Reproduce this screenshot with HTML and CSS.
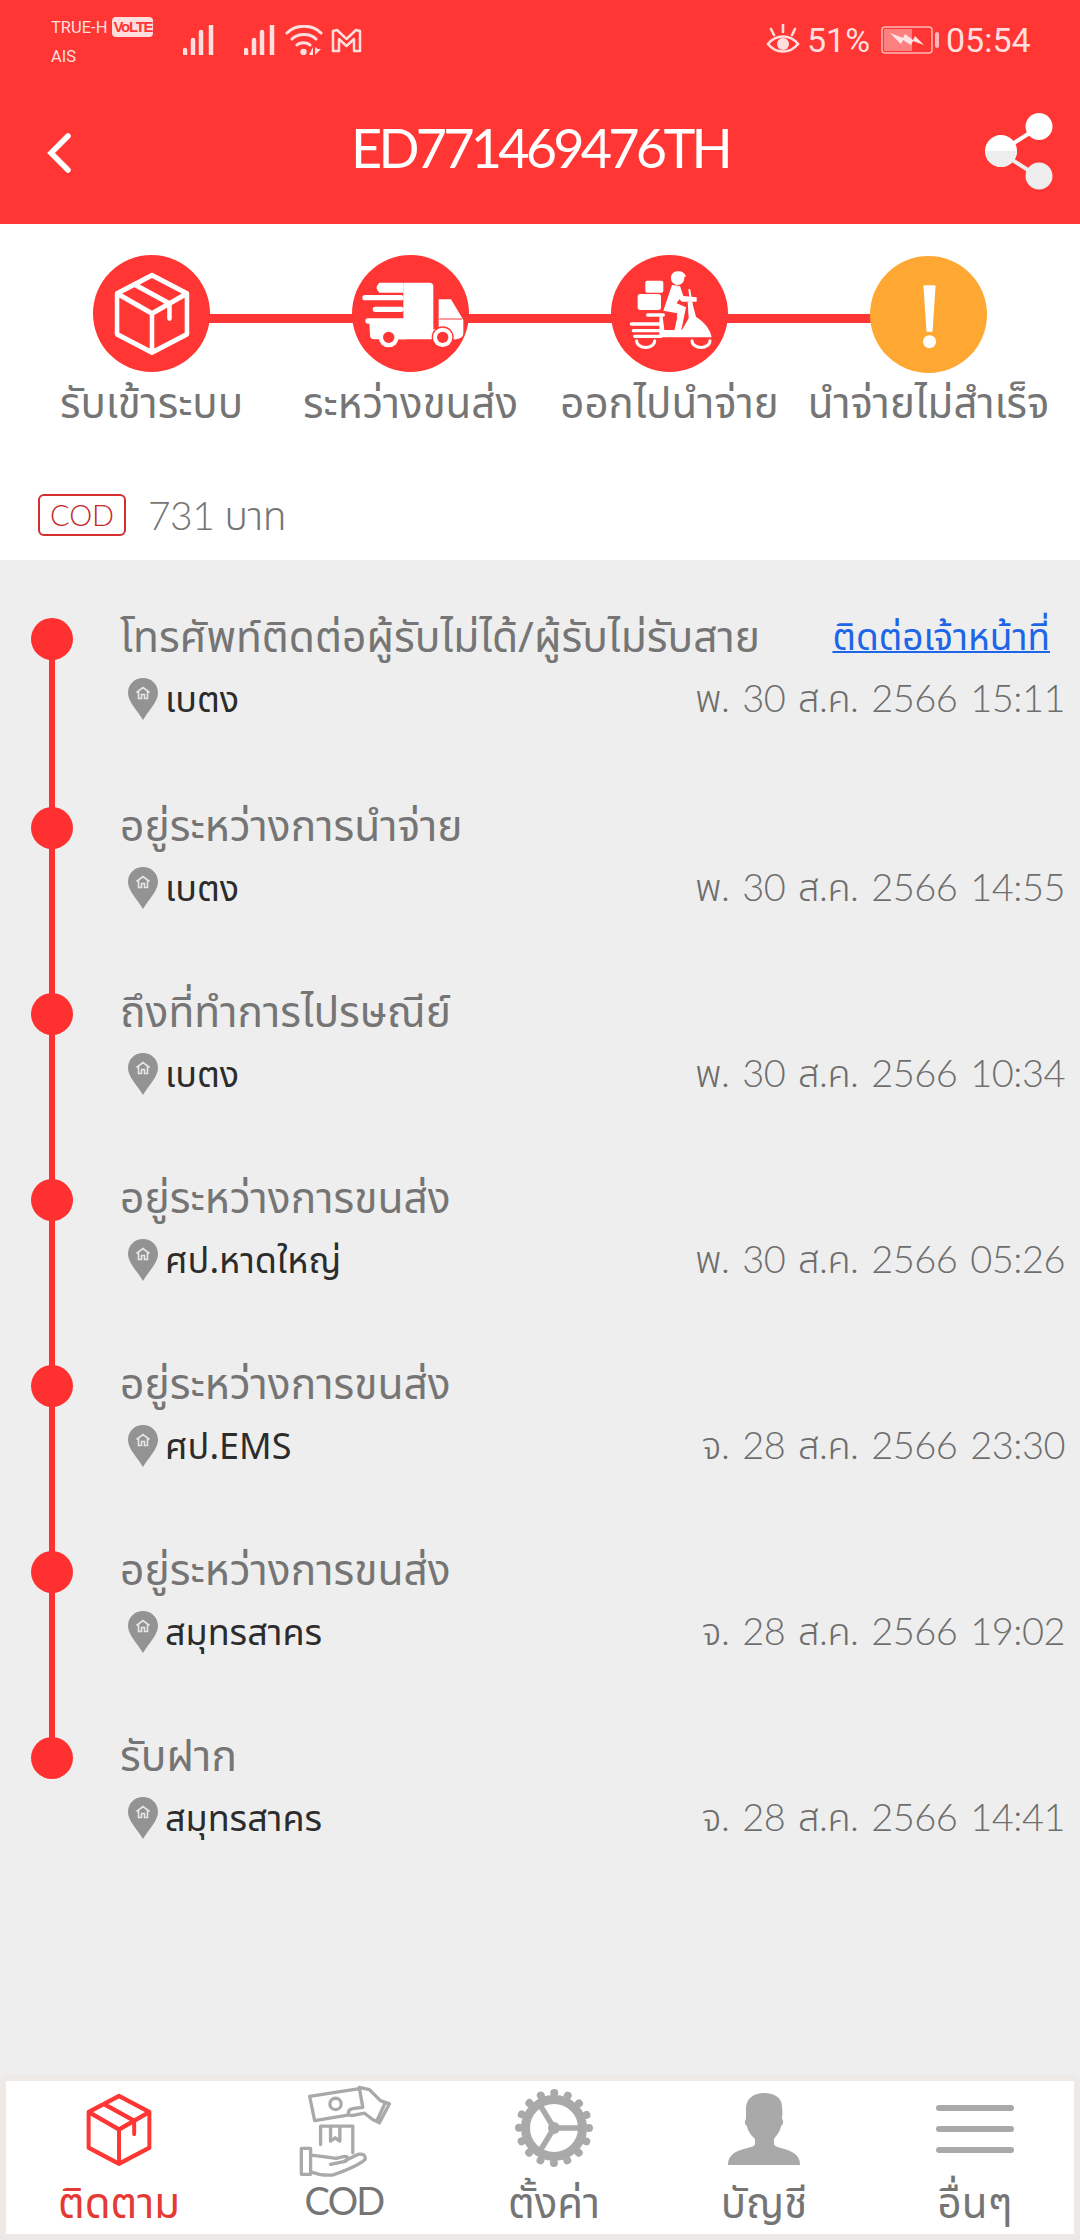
FILE: index.html
```html
<!DOCTYPE html>
<html lang="th">
<head>
<meta charset="utf-8">
<title>ED771469476TH</title>
<link rel="stylesheet" href="styles.css">
</head>
<body>
<svg class="defs" width="0" height="0" aria-hidden="true">
  <defs>
    <symbol id="box" viewBox="0 0 100 100" preserveAspectRatio="none">
      <path d="M50 4 96 26V75L50 97 4 75V26ZM4 26 50 50 96 26M50 50V97M27 15 73 38M73 38V56" fill="none" stroke="currentColor" stroke-width="6" stroke-linejoin="round" stroke-linecap="round"/>
    </symbol>
    <symbol id="pin" viewBox="0 0 30 42">
      <path d="M15 0C7 0 0 6 0 15 0 24 10 33 15 42 20 33 30 24 30 15 30 6 23 0 15 0Z" fill="#939393"/>
      <path d="M8.500 14.500 15 9.500 21.500 14.500M10.500 13V20.500H13.500V16.500H16.500V20.500H19.500V13" fill="none" stroke="#e6e6e6" stroke-width="1.600"/>
    </symbol>
  </defs>
</svg>

<header class="top">
  <div class="status">
    <div class="carriers">
      <div class="carrier-line"><span>TRUE-H</span><b class="volte">VoLTE</b></div>
      <div class="carrier-line">AIS</div>
    </div>
    <svg class="signal" viewBox="0 0 32 30"><path d="M2 25V30M10 15V30M18 7V30M28 0V30" stroke="#ffdede" stroke-width="4.500" stroke-linecap="round" fill="none"/></svg>
    <svg class="signal second" viewBox="0 0 32 30"><path d="M2 25V30M10 15V30M18 7V30M28 0V30" stroke="#ffdede" stroke-width="4.500" stroke-linecap="round" fill="none"/></svg>
    <svg class="wifi" viewBox="0 0 38 30"><path d="M2 8C11-1 27-1 36 8M7 14C13 8 25 8 31 14M12 20C15 17 22 17 25 20" stroke="#ffdede" stroke-width="3" fill="none" stroke-linecap="round"/><circle cx="18.500" cy="27" r="3.200" fill="#ffdede"/><path d="M28 22V30H24ZM30 22V30L36 24H33" fill="#ffdede"/></svg>
    <svg class="mail" viewBox="0 0 31 25"><path d="M2 23V3L6 2 15.500 11 25 2 29 3V23H23V11L15.500 18 8 11V23Z" fill="none" stroke="#ffdede" stroke-width="2.500" stroke-linejoin="round"/></svg>
    <div class="status-right">
      <svg class="eye" viewBox="0 0 34 30"><path d="M2 20C10 10 24 10 32 20 24 30 10 30 2 20Z" fill="none" stroke="#ffdede" stroke-width="2.600"/><circle cx="17" cy="20" r="6" fill="#ffdede"/><path d="M17 1V8M5 5 8 11M29 5 26 11" stroke="#ffdede" stroke-width="2.600" stroke-linecap="round"/></svg>
      <span class="pct">51%</span>
      <svg class="battery" viewBox="0 0 58 28"><rect x="1" y="1" width="50" height="26" rx="3" fill="none" stroke="#ffb5b5" stroke-width="1.500"/><rect x="3" y="3" width="28" height="22" rx="1" fill="#ff8080"/><path d="M9 7 22 12 24 8 32 14 34 10 43 19 32 15 30 19 22 14 20 18Z" fill="#ffe5e5"/><rect x="54" y="6" width="4" height="16" rx="2" fill="#ffb5b5"/></svg>
      <span class="clock">05:54</span>
    </div>
  </div>
  <div class="titlebar">
    <svg class="back" viewBox="0 0 26 42"><path d="M22 4 5 21 22 38" fill="none" stroke="#ffffff" stroke-width="5.500" stroke-linecap="round"/></svg>
    <h1>ED771469476TH</h1>
    <svg class="share" viewBox="0 0 68 78">
      <path d="M15 39 54 14" stroke="#ffffff" stroke-width="4" fill="none"/>
      <path d="M15 39 54 64" stroke="#eeeeee" stroke-width="4" fill="none"/>
      <circle cx="54" cy="13.500" r="13.500" fill="#ffffff"/>
      <circle cx="16" cy="38" r="16" fill="#ffffff"/>
      <path d="M0 38A16 16 0 0 0 32 38Z" fill="#eeeeee"/>
      <circle cx="54" cy="63" r="13.500" fill="#eeeeee"/>
    </svg>
  </div>
</header>

<section class="summary">
  <div class="stepper">
    <span class="track"></span>
    <div class="step">
      <span class="disc"><svg class="disc-box"><use href="#box"/></svg></span>
      <span class="step-label">รับเข้าระบบ</span>
    </div>
    <div class="step">
      <span class="disc">
        <svg class="disc-art" viewBox="18 15 351 351">
          <path d="M172 98H250Q262 98 262 110V245H330V268H160V215H172Z" fill="#fff"/>
          <path d="M100 113H165M57 143H165M88 178H165M66 213H170" stroke="#fff" stroke-width="16" stroke-linecap="round" fill="none"/>
          <path d="M100 98H172V128H100Q85 113 100 98Z" fill="#fff"/>
          <path d="M70 215H180V268H85Q72 268 72 255Z" fill="#fff"/>
          <path d="M278 148H315L352 210V250Q352 265 330 268H262V238H278Z" fill="#fff"/>
          <path d="M280 207H348" stroke="#ff3633" stroke-width="3"/>
          <circle cx="290" cy="262" r="33" fill="#ff3633"/>
          <circle cx="290" cy="262" r="29" fill="#fff"/>
          <circle cx="290" cy="262" r="17" fill="#ff3633"/>
          <circle cx="128" cy="262" r="30" fill="#fff"/>
          <circle cx="128" cy="262" r="17" fill="#ff3633"/>
        </svg>
      </span>
      <span class="step-label">ระหว่างขนส่ง</span>
    </div>
    <div class="step">
      <span class="disc">
        <svg class="disc-art" viewBox="15 15 351 351">
          <rect x="118" y="92" width="54" height="36" rx="6" fill="#fff"/>
          <rect x="95" y="132" width="70" height="48" rx="8" fill="#fff"/>
          <circle cx="215" cy="85" r="20" fill="#fff"/>
          <path d="M195 80Q200 62 220 64 236 66 240 80Z" fill="#fff"/>
          <path d="M198 105 222 108 232 138 272 142V155H228L220 148 212 160 240 172 226 240H205L214 190 172 182Z" fill="#fff"/>
          <path d="M250 120 258 170" stroke="#fff" stroke-width="6" stroke-linecap="round"/>
          <path d="M170 200 175 240H228L248 205 245 155 258 155 270 200Q310 225 317 262H160V200Z" fill="#fff"/>
          <path d="M184 197H206L214 200 206 238H188Q178 238 180 225Z" fill="#ff3633"/>
          <path d="M125 195H172M76 222H165M82 242H165M86 259H165" stroke="#fff" stroke-width="10" stroke-linecap="round"/>
          <path d="M92 272A26 20 0 0 0 146 272M258 272A26 20 0 0 0 312 272" stroke="#fff" stroke-width="9" fill="none" stroke-linecap="round"/>
        </svg>
      </span>
      <span class="step-label">ออกไปนำจ่าย</span>
    </div>
    <div class="step">
      <span class="disc warn">
        <svg class="disc-art" viewBox="0 0 116 116">
          <path d="M53 30Q53 29 55 29H63Q65 29 65 30L62 75H56Z" fill="#fff"/>
          <circle cx="59" cy="85" r="6.500" fill="#fff"/>
        </svg>
      </span>
      <span class="step-label">นำจ่ายไม่สำเร็จ</span>
    </div>
  </div>
  <div class="cod-row">
    <span class="cod-tag">COD</span>
    <span class="cod-amount">731 บาท</span>
  </div>
</section>

<main class="timeline">
  <article class="event">
    <span class="dot"></span>
    <div class="event-body">
      <div class="event-line">
        <span class="event-title">โทรศัพท์ติดต่อผู้รับไม่ได้/ผู้รับไม่รับสาย</span>
        <a class="contact" href="#">ติดต่อเจ้าหน้าที่</a>
      </div>
      <div class="event-line">
        <span class="place"><svg class="pin"><use href="#pin"/></svg>เบตง</span>
        <time class="when">พ. 30 ส.ค. 2566 15:11</time>
      </div>
    </div>
  </article>
  <article class="event">
    <span class="dot"></span>
    <div class="event-body">
      <div class="event-line"><span class="event-title">อยู่ระหว่างการนำจ่าย</span></div>
      <div class="event-line">
        <span class="place"><svg class="pin"><use href="#pin"/></svg>เบตง</span>
        <time class="when">พ. 30 ส.ค. 2566 14:55</time>
      </div>
    </div>
  </article>
  <article class="event">
    <span class="dot"></span>
    <div class="event-body">
      <div class="event-line"><span class="event-title">ถึงที่ทำการไปรษณีย์</span></div>
      <div class="event-line">
        <span class="place"><svg class="pin"><use href="#pin"/></svg>เบตง</span>
        <time class="when">พ. 30 ส.ค. 2566 10:34</time>
      </div>
    </div>
  </article>
  <article class="event">
    <span class="dot"></span>
    <div class="event-body">
      <div class="event-line"><span class="event-title">อยู่ระหว่างการขนส่ง</span></div>
      <div class="event-line">
        <span class="place"><svg class="pin"><use href="#pin"/></svg>ศป.หาดใหญ่</span>
        <time class="when">พ. 30 ส.ค. 2566 05:26</time>
      </div>
    </div>
  </article>
  <article class="event">
    <span class="dot"></span>
    <div class="event-body">
      <div class="event-line"><span class="event-title">อยู่ระหว่างการขนส่ง</span></div>
      <div class="event-line">
        <span class="place"><svg class="pin"><use href="#pin"/></svg>ศป.EMS</span>
        <time class="when">จ. 28 ส.ค. 2566 23:30</time>
      </div>
    </div>
  </article>
  <article class="event">
    <span class="dot"></span>
    <div class="event-body">
      <div class="event-line"><span class="event-title">อยู่ระหว่างการขนส่ง</span></div>
      <div class="event-line">
        <span class="place"><svg class="pin"><use href="#pin"/></svg>สมุทรสาคร</span>
        <time class="when">จ. 28 ส.ค. 2566 19:02</time>
      </div>
    </div>
  </article>
  <article class="event">
    <span class="dot"></span>
    <div class="event-body">
      <div class="event-line"><span class="event-title">รับฝาก</span></div>
      <div class="event-line">
        <span class="place"><svg class="pin"><use href="#pin"/></svg>สมุทรสาคร</span>
        <time class="when">จ. 28 ส.ค. 2566 14:41</time>
      </div>
    </div>
  </article>
</main>

<nav class="tabs">
  <a class="tab active" href="#">
    <svg class="tab-icon tab-box"><use href="#box"/></svg>
    <span>ติดตาม</span>
  </a>
  <a class="tab" href="#">
    <svg class="tab-icon tab-cod" viewBox="20 8 280 280" fill="none" stroke="#a9a9a9" stroke-width="10" stroke-linejoin="round" stroke-linecap="round">
      <path d="M55 45 205 22 215 78 185 82Q170 85 172 97 175 105 190 102L220 96 245 115 265 125 295 68 268 58 235 25 205 18M280 70 258 118M55 45 70 118 170 102"/>
      <circle cx="133" cy="68" r="17"/>
      <path d="M88 190V135H185V215M118 135V180L132 170 146 180V135"/>
      <rect x="30" y="202" width="28" height="78"/>
      <path d="M58 222 85 225 135 232 160 226Q176 226 165 240L118 250M160 240 200 220Q225 215 222 235 200 255 125 282 90 285 58 272"/>
    </svg>
    <span class="latin">COD</span>
  </a>
  <a class="tab" href="#">
    <svg class="tab-icon tab-gear" viewBox="0 0 80 80">
      <circle cx="40" cy="40" r="28.500" fill="none" stroke="#a9a9a9" stroke-width="9"/>
      <circle cx="40" cy="40" r="35" fill="none" stroke="#a9a9a9" stroke-width="8" stroke-dasharray="0.010 13.734" stroke-linecap="round"/>
      <path d="M40 40H68M40 40 26 17M40 40 26 63" stroke="#a9a9a9" stroke-width="5.500"/>
      <circle cx="40" cy="40" r="6" fill="#a9a9a9"/>
    </svg>
    <span>ตั้งค่า</span>
  </a>
  <a class="tab" href="#">
    <svg class="tab-icon tab-person" viewBox="0 0 72 72">
      <path d="M36 0C47 0 54 5 54 14 55 19 54 24 54 26 56 28 55 32 53 33 52 39 48 43 46 46V51C46 55 60 55 67 61 71 64 72 68 72 72H0C0 68 1 64 5 61 12 55 27 55 27 51V46C24 43 20 39 19 33 17 32 16 28 18 26 18 22 18 18 18 14 19 5 26 0 36 0Z" fill="#a9a9a9"/>
    </svg>
    <span>บัญชี</span>
  </a>
  <a class="tab" href="#">
    <span class="tab-icon burger"><i></i><i></i><i></i></span>
    <span>อื่นๆ</span>
  </a>
</nav>
</body>
</html>
```
FILE: styles.css
```css
* { box-sizing: border-box; }
html, body { margin: 0; padding: 0; }
body {
  width: 1080px;
  height: 2240px;
  background: #eeeeee;
  font-family: "Noto Sans Thai", "Noto Sans", "Lato", "DejaVu Sans", sans-serif;
  color: #757575;
  display: flex;
  flex-direction: column;
  overflow: hidden;
}
.defs { position: absolute; }
.top { background: #ff3633; height: 224px; flex: none; }
.status {
  height: 80px;
  display: flex;
  align-items: flex-start;
  padding: 0 51px;
  color: #ffdede;
  font-family: "Roboto", sans-serif;
}
.carriers { width: 132px; padding-top: 13px; font-size: 16.500px; line-height: 29px; }
.carrier-line { display: flex; align-items: center; gap: 5px; height: 29px; }
.volte {
  background: #ffdede;
  color: #ff3633;
  font-size: 15px;
  font-weight: 700;
  border-radius: 4px;
  height: 20px;
  width: 41px;
  line-height: 20px;
  text-align: center;
  font-family: "Liberation Sans", sans-serif;
  letter-spacing: -1.300px;
  margin-top: -2px;
}
.signal { width: 32px; height: 30px; margin-top: 25px; }
.signal.second { margin-left: 29px; }
.wifi { width: 38px; height: 30px; margin: 25px 0 0 9px; }
.mail { width: 31px; height: 25px; margin: 28px 0 0 8px; }
.status-right { margin-left: auto; display: flex; align-items: center; height: 80px; font-size: 34px; }
.eye { width: 34px; height: 30px; margin-right: 7px; margin-top: -3px; }
.pct { width: 74px; }
.battery { width: 58px; height: 28px; margin-right: 7px; }
.clock { width: 83px; }
.titlebar { height: 144px; position: relative; display: flex; align-items: center; justify-content: center; padding-bottom: 8px; }
.titlebar h1 {
  margin: 0;
  font: 400 54px/1 "Lato", sans-serif;
  color: #ffffff;
  letter-spacing: -3.800px;
}
.back { position: absolute; left: 46px; top: 52px; width: 26px; height: 42px; }
.share { position: absolute; left: 985px; top: 33px; width: 68px; height: 78px; }

.summary { background: #ffffff; height: 336px; flex: none; position: relative; }
.stepper {
  display: grid;
  grid-template-columns: repeat(4, 259px);
  padding: 31px 22px 0;
  position: relative;
}
.track { position: absolute; left: 152px; width: 776px; top: 90px; height: 9px; background: #ff3633; }
.step { display: flex; flex-direction: column; align-items: center; position: relative; white-space: nowrap; }
.disc {
  width: 117px;
  height: 117px;
  border-radius: 50%;
  background: #ff3633;
  color: #ffffff;
  display: flex;
  align-items: center;
  justify-content: center;
  flex: none;
}
.disc.warn { background: #ffa733; margin: 1px 0 -1px; }
.disc-box { width: 76px; height: 83px; }
.disc-art { width: 117px; height: 117px; }
.step-label { font-size: 42px; line-height: 60px; margin-top: 3px; }
.cod-row {
  display: flex;
  align-items: center;
  gap: 22px;
  margin: 0 0 0 38px;
  position: absolute;
  top: 270px;
}
.cod-tag {
  width: 88px;
  height: 42px;
  border: 2px solid #d32f2f;
  border-radius: 6px;
  color: #c62828;
  font: 300 29px/38px "Lato", sans-serif;
  text-align: center;
}
.cod-amount { font: 300 39px/38px "Lato", "Noto Sans Thai", "Noto Sans", sans-serif; letter-spacing: -0.500px; }

.timeline { flex: 1; padding-top: 58px; }
.event {
  height: 186px;
  display: flex;
  padding-left: 31px;
  gap: 47px;
  position: relative;
}
.event:first-child { height: 189px; }
.event::after {
  content: "";
  position: absolute;
  left: 49px;
  top: 21px;
  width: 6px;
  height: 100%;
  background: #ff3030;
}
.event:last-child::after { display: none; }
.dot { width: 42px; height: 42px; border-radius: 50%; background: #ff3030; flex: none; position: relative; z-index: 1; }
.event-body { flex: 1; padding-right: 15px; }
.event-line { display: flex; justify-content: space-between; align-items: center; height: 42px; white-space: nowrap; }
.event-line + .event-line { height: 58px; margin-top: 8px; }
.event-title { font-size: 42.500px; }
.contact { color: #1e66e8; font-size: 37px; text-decoration: underline; text-decoration-thickness: 2px; padding-right: 15px; }
.place { display: flex; align-items: flex-end; color: #2c2c2c; font-size: 36px; line-height: 44px; padding-left: 8px; }
.pin { width: 30px; height: 42px; margin: 7px 7px 3px 0; flex: none; }
.when { font: 300 38px/52px "Lato", "Noto Sans Thai", "Noto Sans", sans-serif; color: #6e6e6e; letter-spacing: -0.500px; word-spacing: 3px; }

.tabs {
  flex: none;
  height: 165px;
  margin-top: auto;
  padding: 6px;
  background: #ece9e6;
  border-radius: 8px 8px 0 0;
  display: grid;
  grid-template-columns: 226px 224px 196px 224px 198px;
  grid-template-rows: 153px;
}
.tab {
  background: #ffffff;
  display: flex;
  flex-direction: column;
  align-items: center;
  text-decoration: none;
  color: #757575;
  font-size: 42px;
  line-height: 64px;
  white-space: nowrap;
}
.tab.active { color: #e53935; }
.tab-icon { width: 80px; height: 84px; margin-top: 8px; flex: none; color: #ff3633; }
.tab-box { width: 66px; height: 73px; margin: 12px 0 7px; }
.tab-cod { width: 93px; height: 93px; margin: 3px 0 -4px; }
.tab-gear { width: 80px; height: 80px; margin: 7px 0 5px; }
.tab-person { width: 72px; height: 72px; margin: 12px 0 8px; }
.burger { display: flex; flex-direction: column; gap: 15px; padding-top: 16px; width: 78px; }
.burger i { display: block; height: 6px; border-radius: 3px; background: #a9a9a9; }
.latin { font: 400 38px/54px "Lato", sans-serif; letter-spacing: -1.800px; }
```
